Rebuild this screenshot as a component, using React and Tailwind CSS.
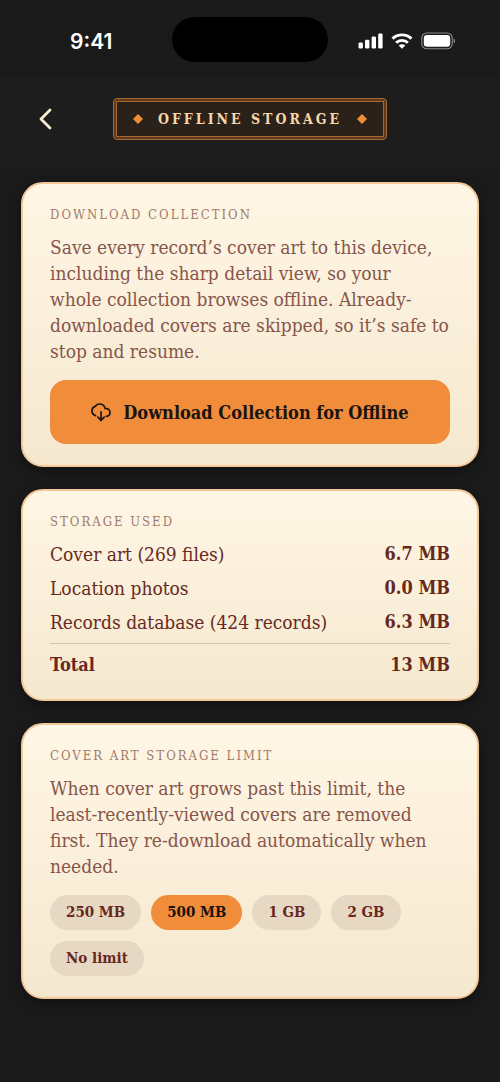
import React, { useState } from 'react';

const STORAGE_ROWS = [
  { label: 'Cover art (269 files)', size: '6.7 MB' },
  { label: 'Location photos', size: '0.0 MB' },
  { label: 'Records database (424 records)', size: '6.3 MB' },
];

const LIMITS = ['250 MB', '500 MB', '1 GB', '2 GB', 'No limit'];

const SignalIcon = () => (
  <svg width="25" height="16" viewBox="0 0 25 16" fill="#fff" aria-hidden="true">
    <rect x="0.5" y="9.5" width="4.4" height="6" rx="1.3" />
    <rect x="7" y="6.8" width="4.4" height="8.7" rx="1.3" />
    <rect x="13.6" y="3.6" width="4.4" height="11.9" rx="1.3" />
    <rect x="20.2" y="0.4" width="4.4" height="15.1" rx="1.3" />
  </svg>
);

const WifiIcon = () => (
  <svg width="22" height="16" viewBox="0 0 22 16" fill="none" stroke="#fff" strokeWidth="2.9" aria-hidden="true">
    <path d="M1.5 5.6C6.8 0.6 15.2 0.6 20.5 5.6" />
    <path d="M5.1 9.8C8.4 6.6 13.6 6.6 16.9 9.8" />
    <path d="M11 15.8L7.7 12.5C9.6 10.8 12.4 10.8 14.3 12.5Z" fill="#fff" stroke="none" />
  </svg>
);

const BatteryIcon = () => (
  <svg width="35" height="18" viewBox="0 0 35 18" fill="none" aria-hidden="true">
    <rect x="0.8" y="1" width="30.4" height="15.8" rx="5" stroke="#8a8a8a" strokeWidth="1.1" />
    <rect x="2.8" y="3" width="26.4" height="11.8" rx="3.2" fill="#fff" />
    <path d="M32.6 6.4C34.6 7.2 34.6 10.6 32.6 11.4Z" fill="#8a8a8a" />
  </svg>
);

// Cloud with an arrow coming out of the bottom
const CloudDownloadIcon = () => (
  <svg width="20" height="19" viewBox="0 0 20 19" fill="none" stroke="#1a1410" strokeWidth="1.7" strokeLinecap="round" strokeLinejoin="round" aria-hidden="true">
    <path d="M4.6 12.6C2.4 11.9 1 10.2 1 8C1 5.6 2.4 3.9 4.3 3.4C5.2 1.8 6.8 1 8.6 1C11.4 1 13.5 2.8 14 5.3C17 5.1 19 6.9 19 9.4C19 11.6 17.5 13.1 15.3 13.3" />
    <path d="M10 8.9V17.2" />
    <path d="M6.8 14.2L10 17.3L13.2 14.2" />
  </svg>
);

const Diamond = () => (
  <svg width="10" height="10" viewBox="0 0 10 10" aria-hidden="true">
    <path d="M5 0L10 5L5 10L0 5Z" fill="#f08c3a" />
  </svg>
);

const Card = ({ title, children }) => (
  <section className="rounded-[22px] border-2 border-[#f2c799] bg-linear-to-b from-[#fff6e5] to-[#f5e8cf] px-[27px] pt-[22px] pb-[21px] shadow-[0_4px_10px_rgba(0,0,0,0.35)]">
    <h2 className="mb-2.5 text-[13px] leading-[18px] tracking-[2px] text-[#a07a6b] uppercase">{title}</h2>
    {children}
  </section>
);

const App = () => {
  const [limit, setLimit] = useState('500 MB');

  return (
    <div className="min-h-screen bg-[#1a1a1a] font-['DejaVu_Serif_Condensed','DejaVu_Serif',serif] text-[#67291f]">
      {/* Status bar */}
      <div className="grid grid-cols-[1fr_156px_1fr] items-center pt-[17px]">
        <span className="pt-1 pl-[70px] font-['Inter',sans-serif] text-[21px] leading-6 font-semibold text-white">9:41</span>
        <div className="h-[45px] rounded-full bg-black" />
        <div className="flex items-center gap-2 pt-0.5 pl-[30px]">
          <SignalIcon />
          <WifiIcon />
          <BatteryIcon />
        </div>
      </div>

      {/* Header */}
      <header className="mt-[15px] grid grid-cols-[1fr_auto_1fr] items-center bg-[#1d1d1d] pt-[21px] pb-7">
        <button type="button" aria-label="Back" className="ml-[30px] flex size-[30px] items-center justify-center">
          <svg width="14" height="24" viewBox="0 0 14 24" fill="none" stroke="#fdf0d5" strokeWidth="2.8" strokeLinecap="round" strokeLinejoin="round">
            <path d="M12 3L3 12L12 21" />
          </svg>
        </button>
        <div className="rounded-[4px] border border-[#a5672f] bg-[#5f3a1c] p-0.5">
          <div className="flex h-9 items-center gap-[15px] border border-[#a5672f] bg-[#2a211b] px-4">
            <Diamond />
            <h1 className="text-[14px] leading-5 font-bold tracking-[3px] whitespace-nowrap text-[#f7d6a8] uppercase">Offline Storage</h1>
            <Diamond />
          </div>
        </div>
      </header>

      <main className="space-y-[22px] px-[21px] pt-3.5 pb-20">
        <Card title="Download Collection">
          <p className="text-[19px] leading-[26px] text-[#87554a]">
            Save every record’s cover art to this device, including the sharp detail view, so your
            <br />
            whole collection browses offline. Already-<wbr />downloaded covers are skipped, so it’s safe to stop and resume.
          </p>
          <button
            type="button"
            className="mt-4 flex h-16 w-full items-center justify-center gap-3 rounded-2xl bg-[#f08c3a] text-[18px] font-bold text-[#1a1410]"
          >
            <CloudDownloadIcon />
            Download Collection for Offline
          </button>
        </Card>

        <Card title="Storage Used">
          <table className="w-full border-separate border-spacing-0 text-[19px] leading-[26px]">
            <tbody>
              {STORAGE_ROWS.map((row) => (
                <tr key={row.label}>
                  <th scope="row" className="pb-2 text-left font-normal">{row.label}</th>
                  <td className="pb-2 text-right text-[18px] font-bold">{row.size}</td>
                </tr>
              ))}
            </tbody>
            <tfoot>
              <tr className="text-[18px]">
                <th scope="row" className="border-t border-[#d3c3b0] pt-2 text-left font-bold">Total</th>
                <td className="border-t border-[#d3c3b0] pt-2 text-right font-bold">13 MB</td>
              </tr>
            </tfoot>
          </table>
        </Card>

        <Card title="Cover Art Storage Limit">
          <p className="text-[19px] leading-[26px] text-[#87554a]">
            When cover art grows past this limit, the least-recently-viewed covers are removed first. They re-download automatically when needed.
          </p>
          <div className="mt-4 flex flex-wrap gap-x-2.5 gap-y-[11px]">
            {LIMITS.map((item) => (
              <button
                key={item}
                type="button"
                aria-pressed={limit === item}
                onClick={() => setLimit(item)}
                className={`h-[35px] rounded-full px-4 text-[15px] font-bold ${
                  limit === item ? 'bg-[#f08c3a] text-[#1a1410]' : 'bg-[#e7d8c4]'
                }`}
              >
                {item}
              </button>
            ))}
          </div>
        </Card>
      </main>
    </div>
  );
};

export default App;
